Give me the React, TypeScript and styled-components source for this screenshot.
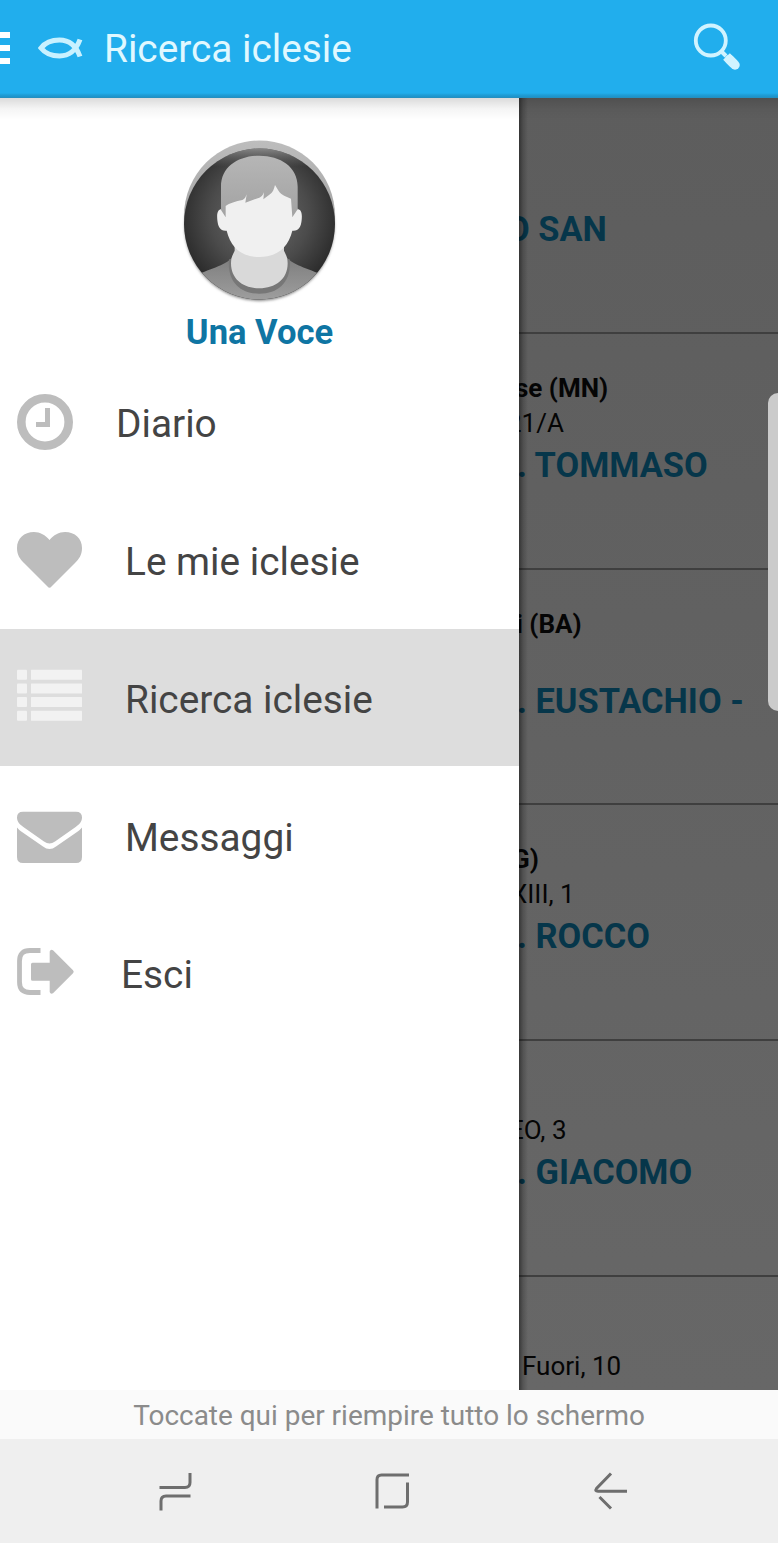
import React from "react";
import styled, { createGlobalStyle } from "styled-components";

const GlobalStyle = createGlobalStyle`
  * { box-sizing: border-box; }
  body { margin: 0; font-family: Roboto, "Liberation Sans", sans-serif; }
`;

const Screen = styled.div`
  width: 778px;
  height: 1543px;
  display: flex;
  flex-direction: column;
  position: relative;
  overflow: hidden;
  background: #fff;
`;

const AppBar = styled.header`
  flex: none;
  height: 98px;
  display: flex;
  align-items: center;
  background: linear-gradient(#21aeed 0, #21aeed 93px, #1f9dd6 95px, #1d93c9 97px, #2b8db9 98px);
`;

const BarsIcon = styled.svg`
  display: block;
  width: 10px;
  height: 32px;
  margin: 0 28px 2px 0;
`;

const FishIcon = styled.svg`
  display: block;
  width: 46px;
  height: 24px;
  margin: 0 20px 3px 0;
`;

const Title = styled.h1`
  flex: 1;
  margin: 0;
  font-size: 38.8px;
  font-weight: 400;
  line-height: 46px;
  white-space: nowrap;
  color: #e0f8ff;
`;

const SearchIcon = styled.svg`
  display: block;
  width: 50px;
  height: 50px;
  margin: 0 36px 4px 0;
`;

const Body = styled.div`
  flex: none;
  height: 1292px;
  display: flex;
  position: relative;
`;

const BarShadow = styled.div`
  position: absolute;
  inset: 0 0 auto 0;
  height: 22px;
  background: linear-gradient(rgba(0, 0, 0, 0.14), rgba(0, 0, 0, 0.04) 50%, transparent);
`;

const Drawer = styled.nav`
  flex: none;
  width: 519px;
  background: #fff;
`;

const Profile = styled.div`
  height: 255px;
  padding-top: 38px;
  display: flex;
  flex-direction: column;
  align-items: center;
`;

const Avatar = styled.svg`
  display: block;
  flex: none;
  width: 160px;
  height: 170px;
`;

const UserName = styled.div`
  margin-top: 6px;
  font-size: 34.6px;
  font-weight: 700;
  line-height: 40px;
  color: #0f75a3;
`;

const MenuItem = styled.div<{ $active?: boolean }>`
  height: 137.8px;
  padding: 38.3px 0 0 17px;
  display: flex;
  align-items: flex-start;
  gap: 43px;
  background: ${(p) => (p.$active ? "#dddddd" : "transparent")};
  color: ${(p) => (p.$active ? "#f2f2f2" : "#bdbdbd")};
`;

const MenuIcon = styled.svg`
  display: block;
  flex: none;
  height: 64px;
`;

const MenuLabel = styled.span`
  font-size: 38.8px;
  line-height: 66px;
  color: #444;
  white-space: nowrap;
`;

const List = styled.main`
  flex: 1;
  min-width: 0;
  overflow: hidden;
  position: relative;
  background: linear-gradient(#5d5d5d, #676767);
`;

const DrawerShadow = styled.div`
  position: absolute;
  inset: 0 auto 0 0;
  width: 9px;
  background: linear-gradient(90deg, rgba(0, 0, 0, 0.45), rgba(0, 0, 0, 0.18) 45%, transparent);
`;

const Church = styled.article`
  height: 235.75px;
  padding-top: 36px;
  border-bottom: 2px solid #3f3f3f;
  white-space: nowrap;
`;

const Town = styled.div<{ $shift: number }>`
  height: 36px;
  margin-left: ${(p) => p.$shift}px;
  font-size: 26px;
  font-weight: 700;
  line-height: 36px;
  color: #050505;
`;

const Street = styled(Town)`
  font-weight: 400;
  line-height: 35px;
`;

const ChurchName = styled.div<{ $shift: number }>`
  margin-left: ${(p) => p.$shift}px;
  font-size: 34.4px;
  font-weight: 700;
  line-height: 47px;
  color: #06364a;
`;

const EdgeHandle = styled.div`
  position: absolute;
  right: 0;
  top: 295px;
  width: 10px;
  height: 318px;
  border-radius: 10px 0 0 10px;
  background: #cbcbcb;
`;

const Hint = styled.div`
  flex: none;
  height: 49px;
  display: flex;
  justify-content: center;
  padding-top: 2px;
  background: #fafafa;
  color: #8b8b8b;
  font-size: 27.95px;
  line-height: 48px;
`;

const NavBar = styled.footer`
  flex: 1;
  display: flex;
  align-items: center;
  justify-content: space-between;
  padding: 0 147px 0 155px;
  background: #efefef;
`;

const NavIcon = styled.svg<{ $nudge?: number }>`
  display: block;
  width: 40px;
  height: 42px;
  margin: 0 ${(p) => -(p.$nudge ?? 0)}px 0 ${(p) => p.$nudge ?? 0}px;
  fill: none;
  stroke: #6e6e6e;
  stroke-width: 3;
`;

const churches = [
  { town: "", street: "", name: "O SAN", shifts: [0, 0, -13] },
  { town: "se (MN)", street: "21/A", name: ". TOMMASO", shifts: [-4, -12, -2] },
  { town: "i (BA)", street: "", name: ". EUSTACHIO -", shifts: [-3, 0, -2] },
  { town: "G)", street: "XIII, 1", name: ". ROCCO", shifts: [-7, -8, -2] },
  { town: "", street: "EO, 3", name: ". GIACOMO", shifts: [0, -10, -2] },
  { town: "", street: "Fuori, 10", name: "", shifts: [0, 3, 0] },
];

const ClockIcon = () => (
  <MenuIcon width="56" viewBox="0 0 56 64" fill="none" stroke="currentColor">
    <circle cx="28" cy="31" r="23.7" strokeWidth="8.6" />
    <path d="M30.5 17V33.5H19" strokeWidth="5" />
  </MenuIcon>
);

const HeartIcon = () => (
  <MenuIcon width="65" viewBox="0 0 65 64" fill="currentColor">
    <path d="M32.5 11C28.5 6 23 3 17 3C7 3 0 9.5 0 19C0 26 3 30 7 34L30.5 57.5Q32.5 60 34.5 57.5L58 34C62 30 65 26 65 19C65 9.5 58 3 48 3C42 3 36.5 6 32.5 11Z" />
  </MenuIcon>
);

const ListIcon = () => (
  <MenuIcon width="65" viewBox="0 0 65 64" fill="currentColor">
    {[2.7, 16.4, 30.1, 43.8].map((y) => (
      <React.Fragment key={y}>
        <rect x="0" y={y} width="10" height="10" rx="1" />
        <rect x="14" y={y} width="51" height="10" rx="0.5" />
      </React.Fragment>
    ))}
  </MenuIcon>
);

const MailIcon = () => (
  <MenuIcon width="65" viewBox="0 0 65 64" fill="currentColor">
    <path d="M6 6.7H59Q65 6.7 65 12.5C65 17 62 19.5 59 21.7L38 36.5Q32.5 40.5 27 36.5L6 21.7C3 19.5 0 17 0 12.5Q0 6.7 6 6.7Z" />
    <path d="M0 22.5C1.5 24.5 3 25.5 5 27L26 41.5Q32.5 46.5 39 41.5L60 27C62 25.5 63.5 24.5 65 22.5V52Q65 58 59 58H6Q0 58 0 52Z" />
  </MenuIcon>
);

const ExitIcon = () => (
  <MenuIcon width="61" viewBox="0 0 61 64" fill="currentColor">
    <path d="M23.5 8.5H13Q2.5 8.5 2.500 19V40Q2.5 50.5 13 50.5H23.5" fill="none" stroke="currentColor" strokeWidth="4.8" />
    <path d="M15.5 20.7H32.7V9.5Q33.5 7 36 8.2L56 28.2Q57.5 29.7 56 31.2L36 51.3Q33.5 52.5 32.7 50V38.8H15.5Q14 38.8 14 37.3V22.2Q14 20.7 15.5 20.7Z" />
  </MenuIcon>
);

const menu = [
  { label: "Diario", Icon: ClockIcon },
  { label: "Le mie iclesie", Icon: HeartIcon },
  { label: "Ricerca iclesie", Icon: ListIcon, active: true },
  { label: "Messaggi", Icon: MailIcon },
  { label: "Esci", Icon: ExitIcon },
];

const UserAvatar = () => (
  <Avatar viewBox="60 48 480 510">
    <defs>
      <linearGradient id="rim" x1="0" y1="0" x2="0" y2="1">
        <stop offset="0" stopColor="#bdbdbd" />
        <stop offset="0.5" stopColor="#a5a5a5" />
      </linearGradient>
      <radialGradient id="disc" cx="0.5" cy="0.45" r="0.55">
        <stop offset="0" stopColor="#707070" />
        <stop offset="0.6" stopColor="#4b4b4b" />
        <stop offset="1" stopColor="#292929" />
      </radialGradient>
      <linearGradient id="discTop" x1="0" y1="0" x2="0" y2="1">
        <stop offset="0" stopColor="#999" stopOpacity="0.8" />
        <stop offset="0.12" stopColor="#777" stopOpacity="0" />
      </linearGradient>
      <linearGradient id="hair" x1="0" y1="0" x2="0" y2="1">
        <stop offset="0" stopColor="#b6b6b6" />
        <stop offset="1" stopColor="#a2a2a2" />
      </linearGradient>
      <linearGradient id="shirt" x1="0" y1="0" x2="0" y2="1">
        <stop offset="0" stopColor="#7c7c7c" />
        <stop offset="1" stopColor="#a3a3a3" />
      </linearGradient>
      <clipPath id="discClip">
        <circle cx="298.5" cy="312" r="226.5" />
      </clipPath>
      <filter id="soft" x="-10%" y="-10%" width="120%" height="120%">
        <feGaussianBlur stdDeviation="4" />
      </filter>
    </defs>
    <circle cx="298.5" cy="318" r="224" fill="#777" filter="url(#soft)" />
    <circle cx="298.5" cy="288" r="226.5" fill="url(#rim)" />
    <circle cx="298.5" cy="312" r="226.5" fill="url(#disc)" />
    <circle cx="298.5" cy="312" r="226.5" fill="url(#discTop)" />
    <g clipPath="url(#discClip)">
      <path d="M110 466C150 445 205 435 222 405L375 405C392 435 447 445 487 466V560H110Z" fill="url(#shirt)" />
      <path d="M207 418C201 485 240 521 298 521C356 521 395 485 389 418Z" fill="#777" />
      <path d="M224 370V392C218 405 213 412 213 430C213 478 250 505 298 505C346 505 383 478 383 430C383 412 378 405 372 392V370Z" fill="#d9d9d9" />
    </g>
    <path d="M185 268C173 268 170 280 172 300C174 321 181 334 200 332C212 382 245 411 298 411C351 411 385 382 397 332C416 334 423 321 425 300C427 280 424 268 412 268L397 190H198Z" fill="#f0f0f0" />
    <path d="M183 270V200C183 140 235 107 298 107C361 107 413 140 413 200V268L397 292L393 236C380 230 364 226 356 213L345 195C342 208 338 218 330 223L310 238L312 217C308 228 303 231 298 233L256 248L260 223C256 235 252 238 247 240C228 244 208 250 197 258V292Z" fill="url(#hair)" />
  </Avatar>
);

export default function App() {
  return (
    <Screen>
      <GlobalStyle />
      <AppBar>
        <BarsIcon viewBox="0 0 10 32" fill="#fff">
          <path d="M0 0H10V6H0ZM0 13H10V19H0ZM0 26H10V32H0Z" />
        </BarsIcon>
        <FishIcon viewBox="0 0 46 24" fill="none" stroke="#c9f1ff" strokeWidth="5">
          <path d="M42 3.5C38 14.5 31 20 21.5 20C13 20 6.500 16.500 3 12C6.500 7.500 13 4 21.500 4C31 4 38 9.500 42 20.500" />
        </FishIcon>
        <Title>Ricerca iclesie</Title>
        <SearchIcon viewBox="0 0 50 50" fill="none" stroke="#d0f3ff">
          <circle cx="18.8" cy="18.5" r="15" strokeWidth="3.8" />
          <path d="M29.5 29.5L34 34" strokeWidth="4" />
          <path d="M37.5 37.5L43 43" strokeWidth="9.5" strokeLinecap="round" />
          <path d="M34.5 34.5L42 42" strokeWidth="9.5" />
        </SearchIcon>
      </AppBar>
      <Body>
        <Drawer>
          <Profile>
            <UserAvatar />
            <UserName>Una Voce</UserName>
          </Profile>
          {menu.map(({ label, Icon, active }) => (
            <MenuItem key={label} $active={active}>
              <Icon />
              <MenuLabel>{label}</MenuLabel>
            </MenuItem>
          ))}
        </Drawer>
        <List>
          {churches.map((c, i) => (
            <Church key={i}>
              <Town $shift={c.shifts[0]}>{c.town}</Town>
              <Street $shift={c.shifts[1]}>{c.street}</Street>
              <ChurchName $shift={c.shifts[2]}>{c.name}</ChurchName>
            </Church>
          ))}
          <DrawerShadow />
        </List>
        <BarShadow />
        <EdgeHandle />
      </Body>
      <Hint>Toccate qui per riempire tutto lo schermo</Hint>
      <NavBar>
        <NavIcon viewBox="0 0 40 42" $nudge={1.5}>
          <path d="M2.5 17.5H28Q33 17.5 33 12.5V3M33.5 26H9Q4 26 4 31V40.5" />
        </NavIcon>
        <NavIcon viewBox="0 0 40 42" $nudge={-1}>
          <path d="M37 5H9.5Q5 5 5 9.5V38.5M12 37H30.5Q35.5 37 35.5 32V12.5" />
        </NavIcon>
        <NavIcon viewBox="0 0 40 42">
          <path d="M20 3.5L5.5 18.5Q3.5 21.3 7 21.3H36M8.5 27L20 38.5" />
        </NavIcon>
      </NavBar>
    </Screen>
  );
}
